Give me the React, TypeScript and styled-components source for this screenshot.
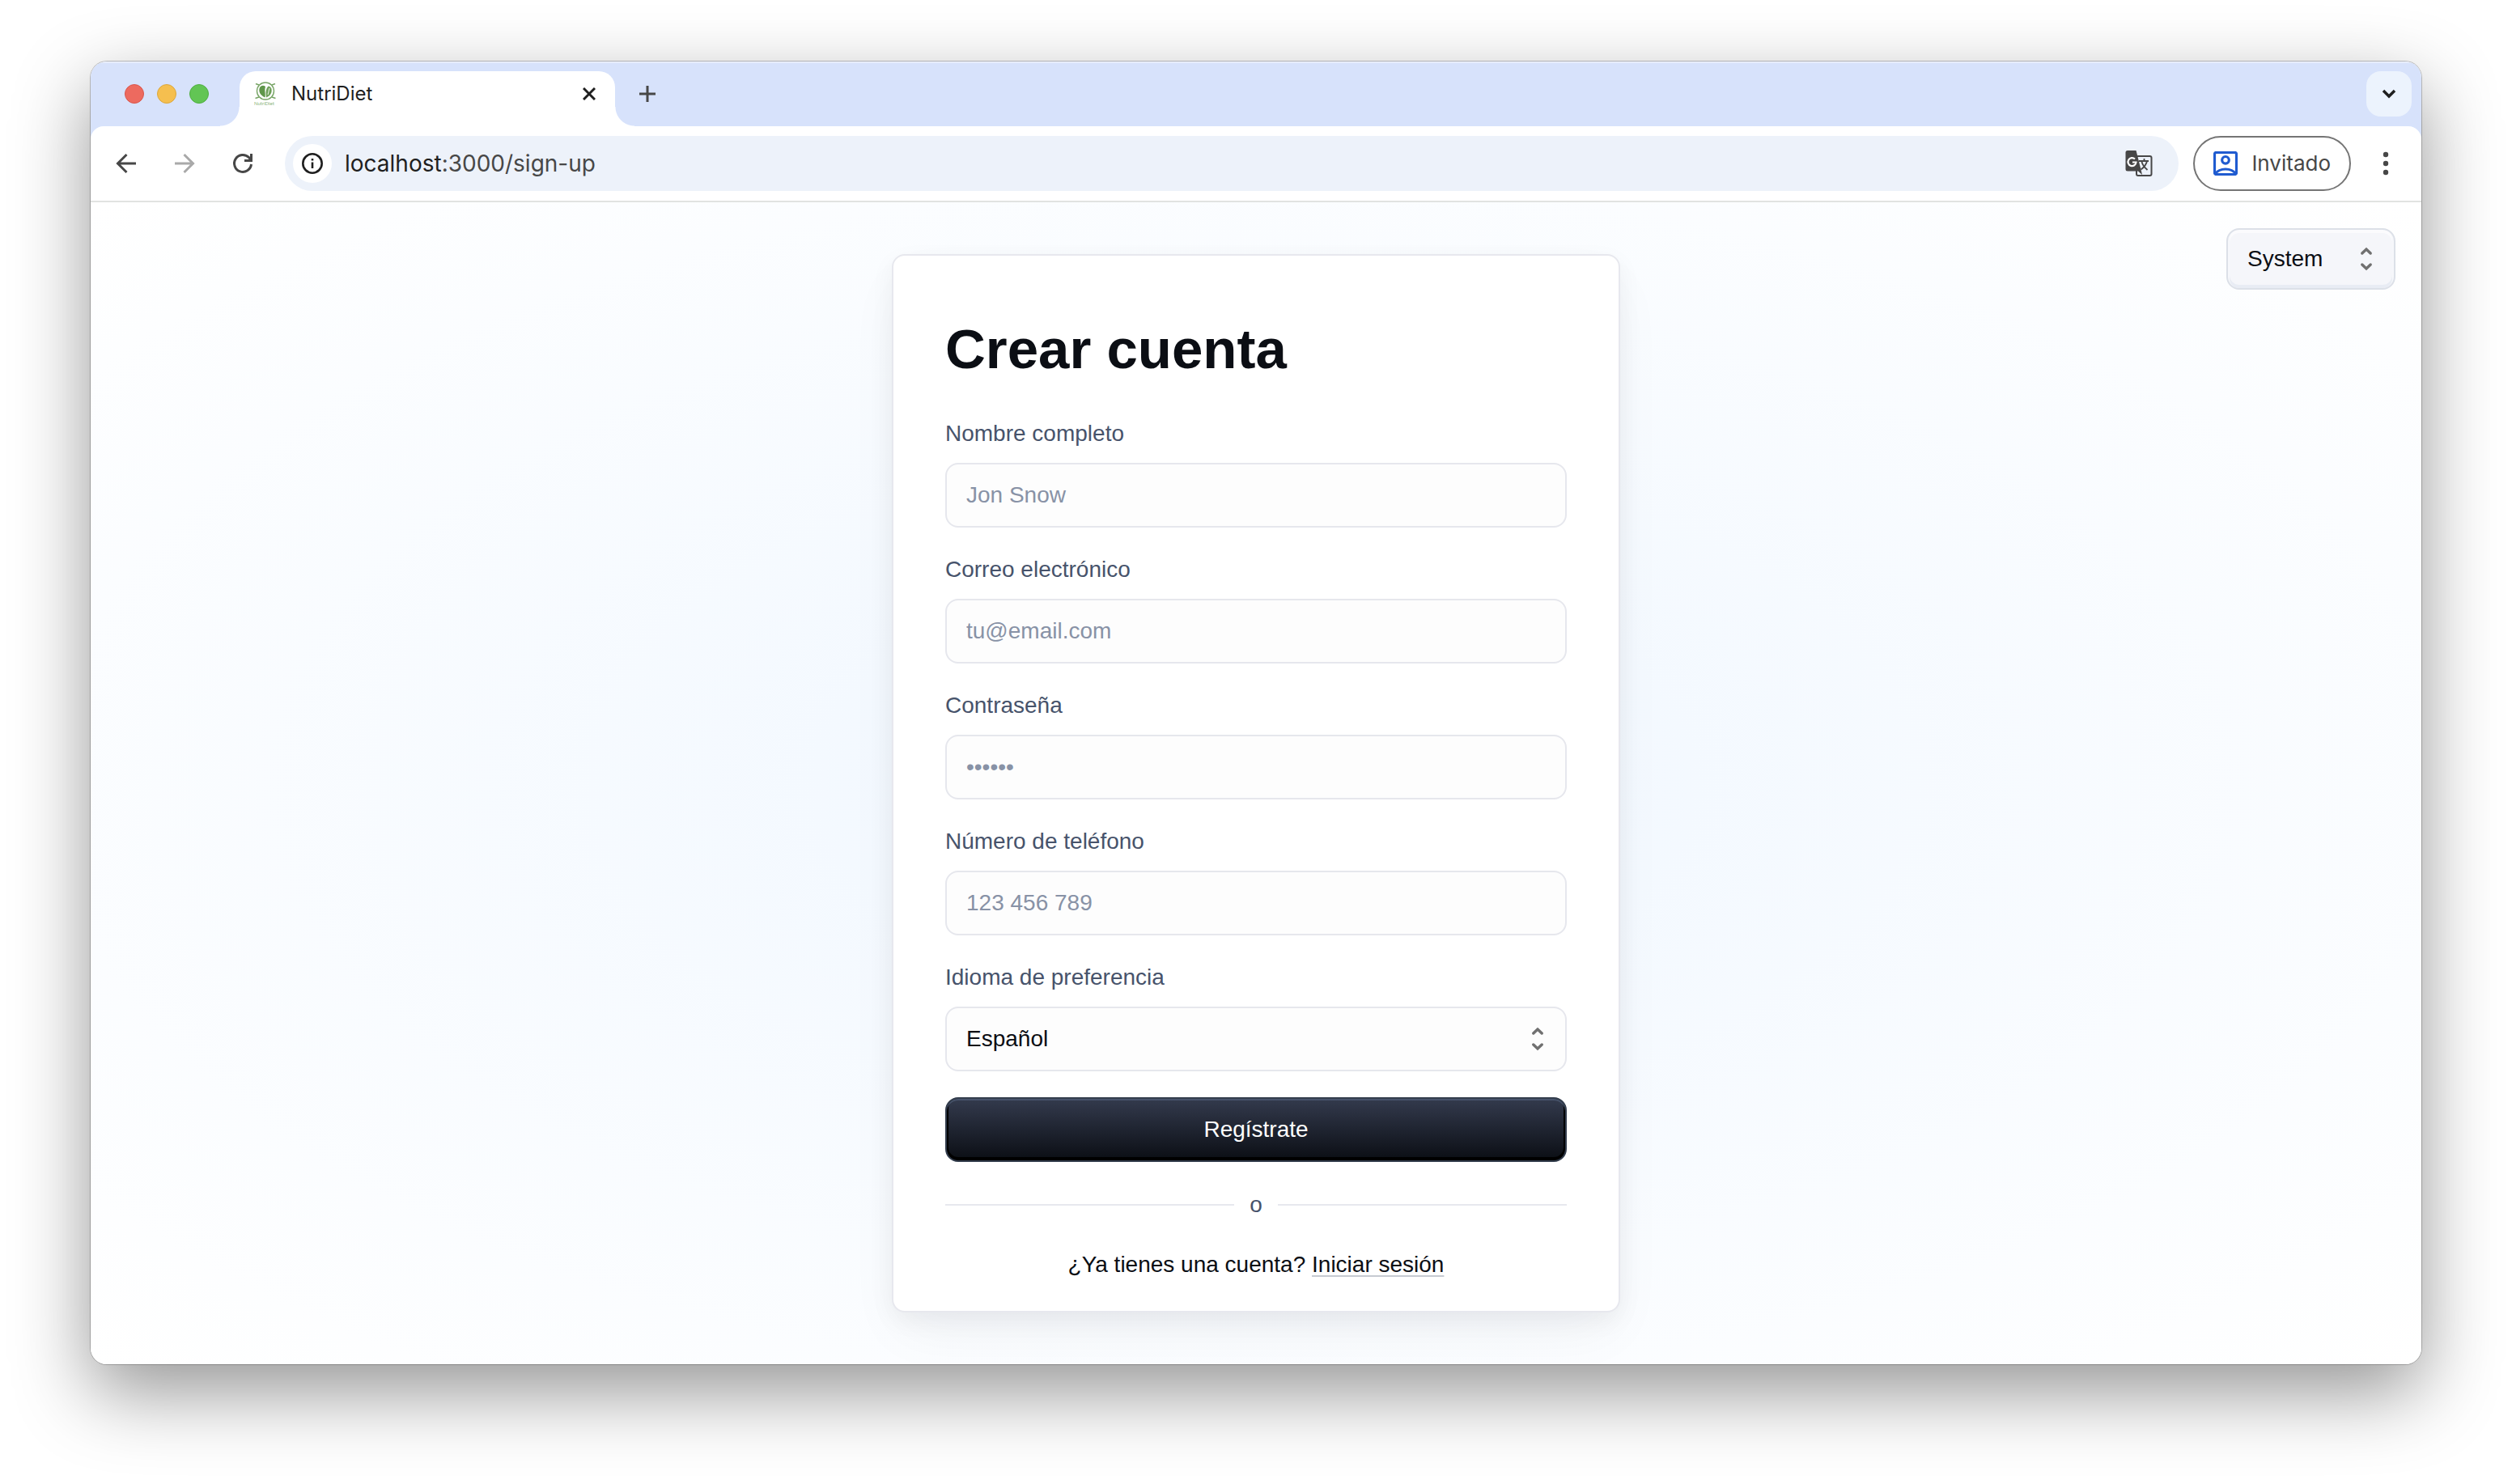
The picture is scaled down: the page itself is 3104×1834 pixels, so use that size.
import React from "react";
import styled, { createGlobalStyle } from "styled-components";

const uiFont = `Inter, Roboto, sans-serif`;
const pageFont = `"Liberation Sans", Arial, sans-serif`;
const ink = "#0b0e14";

const GlobalStyle = createGlobalStyle`
  *, *::before, *::after { box-sizing: border-box; }
  body { margin: 0; background: #fff; }
  button, input, select { font: inherit; color: inherit; margin: 0; }
  button { padding: 0; border: 0; background: none; cursor: pointer; }
  svg { display: block; }
`;

const Desktop = styled.div`
  padding: 76px 112px 148px;
  overflow: hidden;
`;

const BrowserWindow = styled.div`
  border-radius: 20px;
  overflow: hidden;
  background: #fff;
  box-shadow: 0 0 0 1px rgba(0, 0, 0, 0.22), 0 34px 94px rgba(0, 0, 0, 0.42);
`;

const TabStrip = styled.div`
  display: flex;
  align-items: center;
  height: 80px;
  padding: 0 12px 0 42px;
  background: #d7e2fb;
  box-shadow: inset 0 2px 0 rgba(255, 255, 255, 0.4);
  font-family: ${uiFont};
`;

const TrafficLights = styled.div`
  display: flex;
  gap: 16px;
  margin-right: 38px;
`;

const Light = styled.button<{ $fill: string; $rim: string }>`
  width: 24px;
  height: 24px;
  border-radius: 50%;
  background: ${(p) => p.$fill};
  border: 1px solid ${(p) => p.$rim};
`;

const Tab = styled.div`
  position: relative;
  display: flex;
  align-items: center;
  align-self: flex-end;
  width: 464px;
  height: 68px;
  padding: 0 24px 12px 18px;
  border-radius: 20px 20px 0 0;
  background: #fff;
  color: #1f1f1f;

  &::before,
  &::after {
    content: "";
    position: absolute;
    bottom: 0;
    width: 24px;
    height: 24px;
  }
  &::before {
    right: 100%;
    background: radial-gradient(circle at 0 0, transparent 23px, #fff 24px);
  }
  &::after {
    left: 100%;
    background: radial-gradient(circle at 100% 0, transparent 23px, #fff 24px);
  }
`;

const TabTitle = styled.span`
  flex: 1;
  margin-left: 18px;
  font-size: 24px;
  line-height: 32px;
`;

const NewTab = styled.button`
  margin: 0 auto 0 30px;
  color: #474747;
`;

const TabSearch = styled.button`
  display: grid;
  place-items: center;
  width: 56px;
  height: 56px;
  border-radius: 18px;
  background: #ecf3fd;
  color: #1f1f1f;
`;

const ToolbarBack = styled.div`
  background: #d7e2fb;
`;

const Toolbar = styled.div`
  display: flex;
  align-items: center;
  height: 94px;
  padding: 0 25px 0 26px;
  border-bottom: 2px solid #e1e3e1;
  border-radius: 16px 16px 0 0;
  background: #fff;
  font-family: ${uiFont};
  color: #474747;
`;

const NavButtons = styled.div`
  display: flex;
  gap: 36px;
  margin-right: 34px;
`;

const NavButton = styled.button<{ $muted?: boolean }>`
  color: ${(p) => (p.$muted ? "#a9a9a9" : "#474747")};
`;

const Omnibox = styled.div`
  display: flex;
  flex: 1;
  align-items: center;
  height: 68px;
  padding: 0 32px 0 10px;
  border-radius: 34px;
  background: #edf2fa;
`;

const SiteInfo = styled.button`
  display: grid;
  place-items: center;
  width: 48px;
  height: 48px;
  margin-right: 16px;
  border-radius: 50%;
  background: #fff;
  color: #1f1f1f;
`;

const Address = styled.span`
  flex: 1;
  font-size: 28px;
  line-height: 36px;
`;

const Host = styled.span`
  color: #1f1f1f;
`;

const Profile = styled.button`
  display: flex;
  align-items: center;
  height: 68px;
  gap: 17px;
  margin: 0 24px 0 18px;
  padding: 0 23px;
  border: 2px solid #757575;
  border-radius: 34px;
  font-size: 26px;
  line-height: 32px;
`;

const Page = styled.main`
  position: relative;
  display: flex;
  justify-content: center;
  padding: 64px;
  background: radial-gradient(ellipse at 50% 50%, #f0f7ff, #fff);
  font-family: ${pageFont};
  font-size: 28px;
  line-height: 42px;
  color: ${ink};
`;

const SelectWrap = styled.div`
  position: relative;
`;

const ModePicker = styled(SelectWrap)`
  position: absolute;
  top: 32px;
  right: 32px;
  width: 209px;
`;

const Unfold = styled.svg`
  position: absolute;
  top: 50%;
  right: 28px;
  transform: translateY(-50%);
  pointer-events: none;
  color: #707070;
`;

const ModeSelect = styled.select`
  appearance: none;
  display: block;
  width: 100%;
  height: 76px;
  padding: 0 24px;
  border: 2px solid #dce0e8;
  border-radius: 16px;
  background: #f5f6fa;
  box-shadow: inset 0 2px 0 2px rgba(255, 255, 255, 0.6),
    inset 0 -2px 0 2px rgba(220, 226, 238, 0.5);
`;

const Card = styled.form`
  display: flex;
  flex-direction: column;
  gap: 32px;
  width: 100%;
  max-width: 900px;
  padding: 64px 64px 36px;
  border: 2px solid #e7e8ee;
  border-radius: 16px;
  background: #fff;
  box-shadow: 0 10px 30px rgba(9, 11, 17, 0.05),
    0 30px 70px -10px rgba(19, 23, 32, 0.05);
`;

const Title = styled.h1`
  margin: 0;
  font-size: 69px;
  line-height: 104px;
  font-weight: 700;
`;

const Field = styled.div`
  display: flex;
  flex-direction: column;
  gap: 16px;
`;

const Label = styled.label`
  line-height: 40px;
  color: #47536b;
`;

const controlBox = `
  display: block;
  width: 100%;
  height: 80px;
  padding: 0 24px;
  border: 2px solid #e6e7ed;
  border-radius: 16px;
  background: #fdfdfd;
`;

const Input = styled.input`
  ${controlBox}
  &::placeholder { color: #8892a6; opacity: 1; }
`;

const LanguageSelect = styled.select`
  appearance: none;
  ${controlBox}
`;

const Submit = styled.button`
  height: 80px;
  border: 2px solid #333d4d;
  border-radius: 16px;
  background: linear-gradient(180deg, #333a4d, #0b0e14);
  box-shadow: inset 0 2px 0 #47536b, inset 0 -2px 0 2px #000;
  color: #fff;
`;

const Divider = styled.div`
  display: flex;
  align-items: center;
  gap: 19px;
  color: #47536b;

  &::before,
  &::after {
    content: "";
    flex: 1;
    border-top: 2px solid #e7e8ee;
  }
`;

const Footnote = styled.p`
  margin: 0;
  text-align: center;
`;

const Link = styled.a`
  color: inherit;
  text-decoration: underline 2px #c6cad1;
  text-underline-offset: 4px;
  text-decoration-skip-ink: none;
`;

const UnfoldIcon = () => (
  <Unfold width="16" height="30" viewBox="0 0 16 30" fill="none" stroke="currentColor" strokeWidth="3.400" strokeLinecap="round" aria-hidden>
    <path d="m2.800 8 5.200-5 5.200 5M2.800 22l5.200 5 5.200-5" />
  </Unfold>
);

const Favicon = () => (
  <svg width="28" height="30" viewBox="0 0 28 30" aria-hidden>
    <g fill="none" stroke="#78a566">
      <circle cx="14" cy="11.500" r="10.500" strokeWidth="1.400" />
      <path d="M6 4 2 2.500M22 4l4-1.500M6 19l-4.500 1.500M22 19l4.500 1.500" strokeWidth="1.600" />
    </g>
    <path d="M13.500 19.500C8 17 5.500 13 6.500 8.500c1-4 5-4.500 7.500-2.500-1.500 5 .500 9-.500 13.500Z" fill="#5f964a" />
    <path d="M15 19.500c-1-6-.500-11 2.500-14 4 .500 4.500 4 4 7-.800 4-3.500 5.500-6.500 7Z" fill="#6ea05a" />
    <path d="M17 16c1-3 1-5 2-8" stroke="#dcebd6" strokeWidth="1.200" fill="none" />
    <text x="0" y="29" fontFamily="Lato, sans-serif" fontSize="6" fill="#8db47c">NutriDiet</text>
  </svg>
);

const BackIcon = () => (
  <svg width="36" height="36" viewBox="0 0 36 36" fill="none" stroke="currentColor" strokeWidth="3" aria-hidden>
    <path d="M30 18H8M18.500 7 7.500 18l11 11" />
  </svg>
);

const ForwardIcon = () => (
  <svg width="36" height="36" viewBox="0 0 36 36" fill="none" stroke="currentColor" strokeWidth="3" aria-hidden>
    <path d="M6 18h22M17.500 7l11 11-11 11" />
  </svg>
);

const ReloadIcon = () => (
  <svg width="36" height="36" viewBox="0 0 36 36" fill="none" stroke="currentColor" strokeWidth="3" aria-hidden>
    <path d="M28.500 19A10.500 10.500 0 1 1 25.500 10.500L28 13.500" />
    <path d="M28.500 6v8.500H20" />
  </svg>
);

const InfoIcon = () => (
  <svg width="28" height="28" viewBox="0 0 28 28" aria-hidden>
    <circle cx="14" cy="14" r="11.700" fill="none" stroke="currentColor" strokeWidth="2.600" />
    <path d="M12.700 12.500h2.600V20h-2.600zM12.700 8h2.600v2.600h-2.600z" fill="currentColor" />
  </svg>
);

const TranslateIcon = () => (
  <svg width="34" height="34" viewBox="0 0 34 34" aria-hidden>
    <rect x="14" y="8" width="18.500" height="24" rx="2" fill="none" stroke="#474747" strokeWidth="2" />
    <path d="M17 14h12M23.500 11v3M27 14c-1 5-4 8-7.500 10.500M20.500 15c1 4 3.500 7 7 10" fill="none" stroke="#474747" strokeWidth="1.800" />
    <path d="M3 1h10.500l6.500 25.500 1 4.500-5-4.500H3A2.500 2.500 0 0 1 .500 24V3.500A2.500 2.500 0 0 1 3 1Z" fill="#474747" />
    <path d="M12 11.500a5 5 0 1 0 1.500 4H9" fill="none" stroke="#fff" strokeWidth="2.200" />
  </svg>
);

const GuestIcon = () => (
  <svg width="30" height="30" viewBox="0 0 30 30" fill="none" stroke="#1f5bd0" aria-hidden>
    <rect x="1.500" y="1.500" width="27" height="27" rx="2" strokeWidth="3.200" />
    <circle cx="15" cy="10.800" r="4.300" strokeWidth="3.200" />
    <path d="M2 28c3-4 8-6 13-6s10 2 13 6" strokeWidth="3.200" />
  </svg>
);

const fields = [
  { id: "name", label: "Nombre completo", type: "text", placeholder: "Jon Snow" },
  { id: "email", label: "Correo electrónico", type: "email", placeholder: "tu@email.com" },
  { id: "password", label: "Contraseña", type: "password", placeholder: "••••••" },
  { id: "phone", label: "Número de teléfono", type: "tel", placeholder: "123 456 789" },
];

export default function App() {
  return (
    <>
      <GlobalStyle />
      <Desktop>
        <BrowserWindow>
          <TabStrip>
            <TrafficLights>
              <Light $fill="#ed6a5f" $rim="#d9554b" aria-label="Cerrar ventana" />
              <Light $fill="#f5bf4f" $rim="#dca73c" aria-label="Minimizar" />
              <Light $fill="#62c554" $rim="#4fae40" aria-label="Maximizar" />
            </TrafficLights>
            <Tab>
              <Favicon />
              <TabTitle>NutriDiet</TabTitle>
              <button aria-label="Cerrar pestaña">
                <svg width="16" height="16" viewBox="0 0 16 16" stroke="currentColor" strokeWidth="3" aria-hidden>
                  <path d="m1 1 14 14M15 1 1 15" />
                </svg>
              </button>
            </Tab>
            <NewTab aria-label="Nueva pestaña">
              <svg width="20" height="20" viewBox="0 0 20 20" stroke="currentColor" strokeWidth="3" aria-hidden>
                <path d="M10 0v20M0 10h20" />
              </svg>
            </NewTab>
            <TabSearch aria-label="Buscar pestañas">
              <svg width="18" height="12" viewBox="0 0 18 12" fill="none" stroke="currentColor" strokeWidth="3.500" aria-hidden>
                <path d="m2 2 7 7 7-7" />
              </svg>
            </TabSearch>
          </TabStrip>
          <ToolbarBack>
            <Toolbar>
              <NavButtons>
                <NavButton aria-label="Atrás"><BackIcon /></NavButton>
                <NavButton aria-label="Adelante" $muted><ForwardIcon /></NavButton>
                <NavButton aria-label="Recargar"><ReloadIcon /></NavButton>
              </NavButtons>
              <Omnibox>
                <SiteInfo aria-label="Información del sitio"><InfoIcon /></SiteInfo>
                <Address><Host>localhost</Host>:3000/sign-up</Address>
                <button aria-label="Traducir"><TranslateIcon /></button>
              </Omnibox>
              <Profile><GuestIcon />Invitado</Profile>
              <button aria-label="Menú">
                <svg width="38" height="30" viewBox="0 0 38 30" fill="currentColor" aria-hidden>
                  <circle cx="19" cy="4" r="3.200" />
                  <circle cx="19" cy="15" r="3.200" />
                  <circle cx="19" cy="26" r="3.200" />
                </svg>
              </button>
            </Toolbar>
          </ToolbarBack>
          <Page>
            <ModePicker>
              <ModeSelect aria-label="Tema" defaultValue="system">
                <option value="system">System</option>
                <option value="light">Light</option>
                <option value="dark">Dark</option>
              </ModeSelect>
              <UnfoldIcon />
            </ModePicker>
            <Card onSubmit={(e) => e.preventDefault()}>
              <Title>Crear cuenta</Title>
              {fields.map((f) => (
                <Field key={f.id}>
                  <Label htmlFor={f.id}>{f.label}</Label>
                  <Input id={f.id} type={f.type} placeholder={f.placeholder} />
                </Field>
              ))}
              <Field>
                <Label htmlFor="language">Idioma de preferencia</Label>
                <SelectWrap>
                  <LanguageSelect id="language" defaultValue="es">
                    <option value="es">Español</option>
                    <option value="en">English</option>
                  </LanguageSelect>
                  <UnfoldIcon />
                </SelectWrap>
              </Field>
              <Submit type="submit">Regístrate</Submit>
              <Divider>o</Divider>
              <Footnote>
                ¿Ya tienes una cuenta? <Link href="#sign-in">Iniciar sesión</Link>
              </Footnote>
            </Card>
          </Page>
        </BrowserWindow>
      </Desktop>
    </>
  );
}
